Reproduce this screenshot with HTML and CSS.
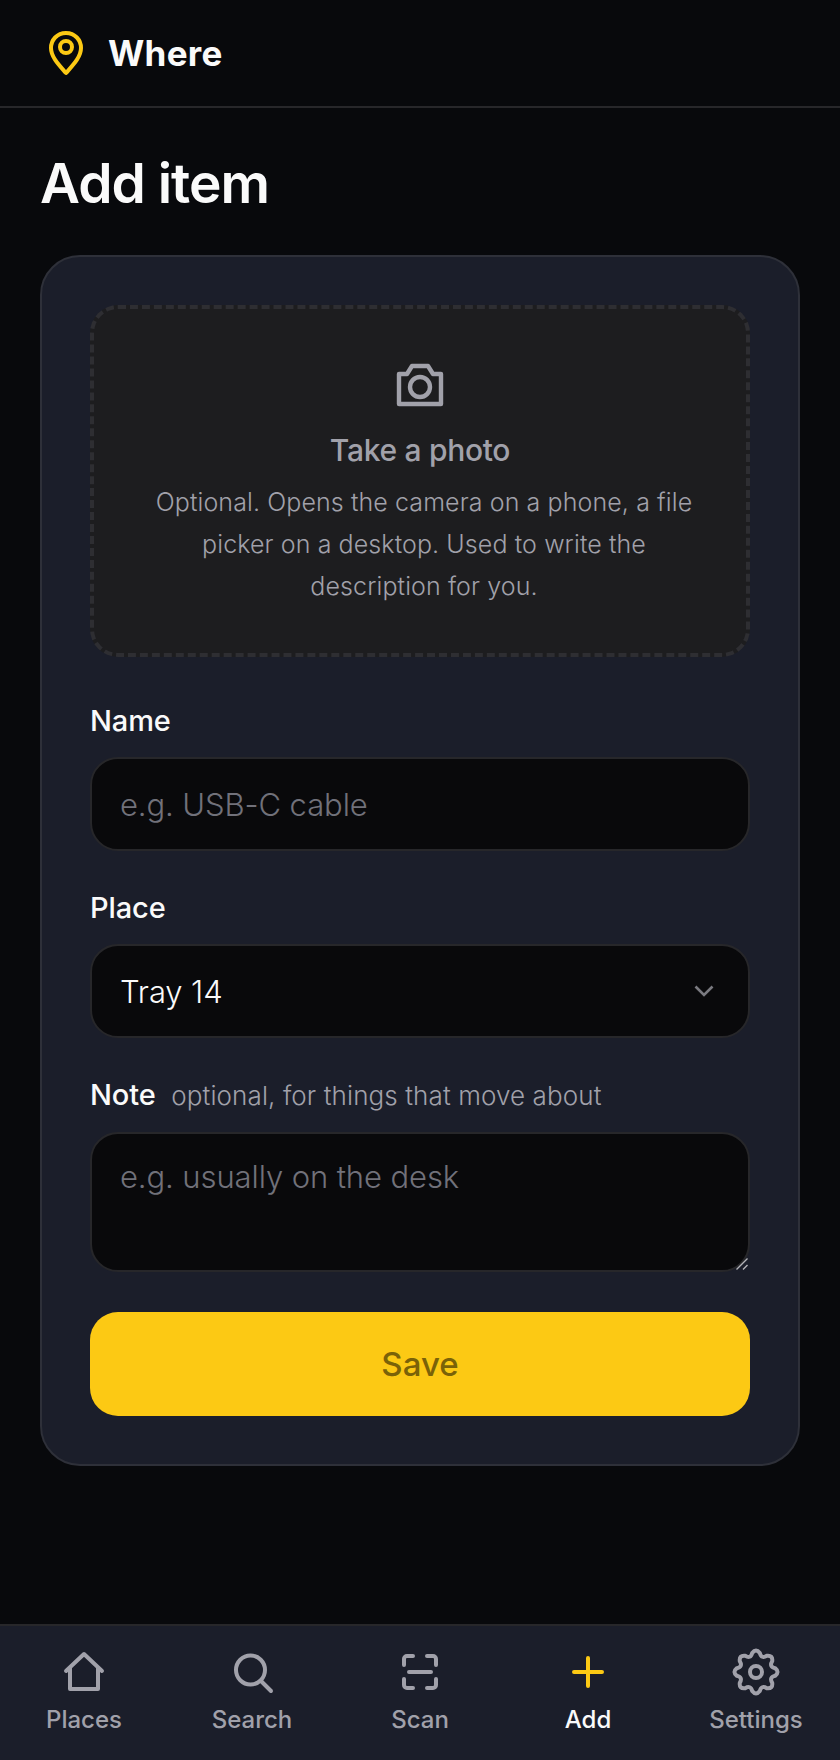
FILE: index.html
```html
<!DOCTYPE html>
<html lang="en">
<head>
    <meta charset="UTF-8" />
    <meta name="viewport" content="width=device-width, initial-scale=1.0" />
    <title>Add item</title>
    <link rel="stylesheet" href="styles.css">
</head>
<body>
    <header class="top-bar">
        <svg class="logo" viewBox="0 0 36 46" fill="none" stroke="#fcc914" stroke-width="4" stroke-linejoin="round">
            <path d="M18 3C9 3 3 10 3 18c0 9 8 17 15 25 7-8 15-16 15-25C33 10 27 3 18 3Z" />
            <circle cx="18" cy="17" r="6" />
        </svg>
        <span class="brand">Where</span>
    </header>

    <main class="content">
        <h1>Add item</h1>
        <form class="card">
            <div class="photo-box">
                <svg class="camera" viewBox="0 0 48 48" fill="none" stroke="#a1a1aa" stroke-width="4.4" stroke-linejoin="round">
                    <path d="M3 14h8l5-8h16l5 8h8v30H3Z" />
                    <circle cx="24" cy="27" r="10" />
                </svg>
                <div class="photo-title">Take a photo</div>
                <p class="photo-text">Optional. Opens the camera on a phone, a file picker on a desktop. Used to write the description for you.</p>
            </div>

            <label class="field-label first" for="name">Name</label>
            <input class="field" type="text" id="name" placeholder="e.g. USB-C cable" />

            <label class="field-label" for="place">Place</label>
            <div class="select-wrap">
                <select class="field" id="place">
                    <option>Tray 14</option>
                </select>
                <svg class="chevron" viewBox="0 0 20 12" fill="none" stroke="#7a7a80" stroke-width="2.6">
                    <path d="M1.5 1.5 10 10l8.5-8.5" />
                </svg>
            </div>

            <label class="field-label" for="note">Note <span class="hint">optional, for things that move about</span></label>
            <div class="select-wrap">
                <textarea class="field note" id="note" placeholder="e.g. usually on the desk"></textarea>
                <svg class="grip" viewBox="0 0 12 12" fill="none" stroke="#b4b4b8" stroke-width="1.4">
                    <path d="M0.5 11.5 11.5 0.5M7 11.5l4.5-4.5" />
                </svg>
            </div>

            <button type="button" class="save">Save</button>
        </form>
    </main>

    <nav class="bottom-nav">
        <a class="nav-item">
            <svg viewBox="0 0 48 48" fill="none" stroke="currentColor" stroke-width="4" stroke-linecap="round" stroke-linejoin="round">
                <path d="M6 23 24 6l18 17M10 20v21h28V20" />
            </svg>
            Places
        </a>
        <a class="nav-item">
            <svg viewBox="0 0 48 48" fill="none" stroke="currentColor" stroke-width="4" stroke-linecap="round">
                <circle cx="22.5" cy="22" r="14.5" />
                <path d="m33 33 10 10" />
            </svg>
            Search
        </a>
        <a class="nav-item">
            <svg viewBox="0 0 48 48" fill="none" stroke="currentColor" stroke-width="4" stroke-linecap="round" stroke-linejoin="round">
                <path d="M17 8h-6a3 3 0 0 0-3 3v6M31 8h6a3 3 0 0 1 3 3v6M17 40h-6a3 3 0 0 1-3-3v-6M31 40h6a3 3 0 0 0 3-3v-6M13 24h22" />
            </svg>
            Scan
        </a>
        <a class="nav-item active">
            <svg viewBox="0 0 48 48" fill="none" stroke="#fcc914" stroke-width="4" stroke-linecap="round">
                <path d="M24 10v28M10 24h28" />
            </svg>
            Add
        </a>
        <a class="nav-item">
            <svg viewBox="0 0 48 48" fill="none" stroke="currentColor" stroke-width="4" stroke-linejoin="round">
                <path d="M20.2 4.9Q24 0 27.8 4.9Q29.4 11.1 34.8 7.8Q41 7 40.2 13.2Q36.9 18.6 43.1 20.2Q48 24 43.1 27.8Q36.9 29.4 40.2 34.8Q41 41 34.8 40.2Q29.4 36.9 27.8 43.1Q24 48 20.2 43.1Q18.6 36.9 13.2 40.2Q7 41 7.8 34.8Q11.1 29.4 4.9 27.8Q0 24 4.9 20.2Q11.1 18.6 7.8 13.2Q7 7 13.2 7.8Q18.6 11.1 20.2 4.9Z" />
                <circle cx="24" cy="24" r="6" />
            </svg>
            Settings
        </a>
    </nav>
</body>
</html>
```

FILE: styles.css
```css
* {
    box-sizing: border-box;
}

html {
    color-scheme: dark;
}

body {
    font-family: "Inter", "Noto Sans", sans-serif;
    margin: 0;
    min-height: 1760px;
    display: flex;
    flex-direction: column;
    background-color: #08090c;
    color: #fafafa;
}

.top-bar {
    display: flex;
    align-items: center;
    gap: 24px;
    height: 108px;
    padding: 0 48px;
    border-bottom: 2px solid #27272a;
}

.logo {
    width: 36px;
    height: 46px;
}

.brand {
    font-size: 35px;
    font-weight: 700;
    letter-spacing: 0.3px;
}

.content {
    flex: 1;
    padding: 0 40px;
}

h1 {
    margin: 37px 0 34px;
    font-size: 55px;
    line-height: 76px;
    font-weight: 600;
    letter-spacing: -1px;
}

.card {
    display: flex;
    flex-direction: column;
    padding: 48px;
    background-color: #1b1e2a;
    border: 2px solid #2e3039;
    border-radius: 40px;
}

.photo-box {
    display: flex;
    flex-direction: column;
    align-items: center;
    height: 352px;
    padding: 51px 48px 0;
    background-color: #1d1d1f;
    border: 4px dashed #2e2e32;
    border-radius: 28px;
    text-align: center;
}

.camera {
    width: 48px;
    height: 48px;
}

.photo-title {
    margin-top: 20px;
    font-size: 30px;
    line-height: 44px;
    font-weight: 500;
    letter-spacing: -0.3px;
    color: #a1a1aa;
}

.photo-text {
    margin: 9px 0 0 8px;
    font-size: 25px;
    line-height: 42px;
    font-weight: 300;
    letter-spacing: 0.1px;
    color: #a1a1aa;
}

.field-label {
    display: block;
    margin: 43px 0 22px;
    font-size: 29px;
    line-height: 28px;
    font-weight: 500;
    letter-spacing: -0.1px;
}

.field-label.first {
    margin-top: 50px;
}

.hint {
    margin-left: 8px;
    font-size: 26px;
    font-weight: 300;
    letter-spacing: 0.1px;
    color: #a1a1aa;
}

.field {
    display: block;
    width: 100%;
    height: 94px;
    padding: 0 28px;
    font-family: inherit;
    font-size: 31px;
    font-weight: 300;
    letter-spacing: -0.1px;
    color: #fafafa;
    background-color: #09090b;
    border: 2px solid #27272a;
    border-radius: 28px;
}

.field::placeholder {
    color: #71717a;
}

.select-wrap {
    position: relative;
}

.select-wrap .field {
    appearance: none;
}

.chevron {
    position: absolute;
    top: 41px;
    right: 36px;
    width: 20px;
    height: 12px;
}

.note {
    height: 140px;
    padding-top: 22px;
    line-height: 42px;
    resize: none;
}

.grip {
    position: absolute;
    right: 2px;
    bottom: 2px;
    width: 12px;
    height: 12px;
}

.save {
    height: 104px;
    margin-top: 40px;
    font-family: inherit;
    font-size: 33px;
    font-weight: 500;
    color: #7a6208;
    background-color: #fcc914;
    border: none;
    border-radius: 28px;
}

.bottom-nav {
    display: grid;
    grid-template-columns: repeat(5, 1fr);
    height: 136px;
    padding-top: 22px;
    background-color: #1b1e2a;
    border-top: 2px solid #27272a;
}

.nav-item {
    display: flex;
    flex-direction: column;
    align-items: center;
    gap: 9px;
    font-size: 24px;
    line-height: 30px;
    font-weight: 500;
    color: #a1a1aa;
}

.nav-item svg {
    width: 48px;
    height: 48px;
}

.nav-item.active {
    color: #fafafa;
}
```
